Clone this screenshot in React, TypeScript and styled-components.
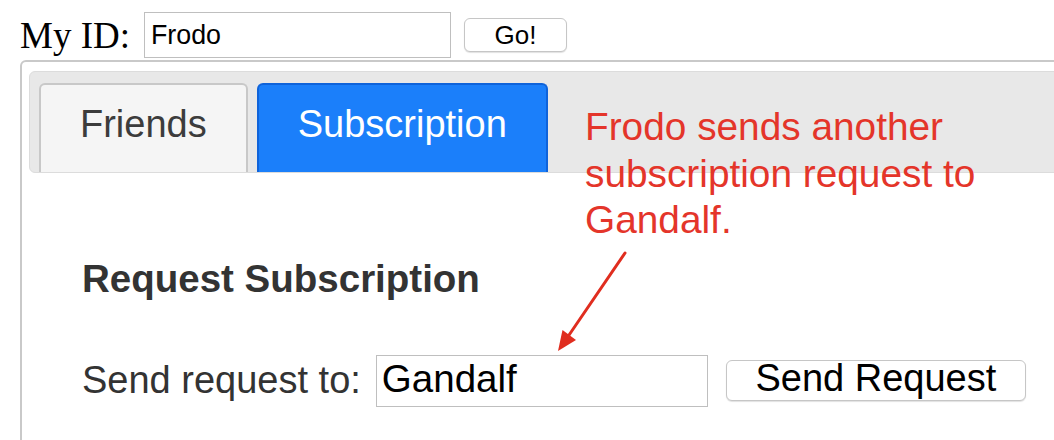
import React from "react";
import styled, { createGlobalStyle } from "styled-components";

const GlobalStyle = createGlobalStyle`
  html, body {
    margin: 0;
    padding: 0;
    background: #ffffff;
    overflow: hidden;
  }
  * { box-sizing: border-box; }
`;

const Page = styled.div`
  position: relative;
  width: 1100px;
  height: 440px;
  padding: 12px 0 0 20px;
  font-family: "Liberation Sans", Arial, sans-serif;
  overflow: hidden;
`;

const TopBar = styled.div`
  display: flex;
  align-items: center;
  height: 46px;
`;

const IdLabel = styled.span`
  font-family: "Liberation Serif", "Times New Roman", serif;
  font-size: 37px;
  color: #000;
  margin-right: 14px;
`;

const TextInput = styled.input<{ $w: number; $h: number; $size: number; $pl: number; $pb?: number }>`
  width: ${(p) => p.$w}px;
  height: ${(p) => p.$h}px;
  font-family: "Liberation Sans", Arial, sans-serif;
  font-size: ${(p) => p.$size}px;
  color: #000;
  border: 1px solid #bfbfbf;
  border-radius: 0;
  padding: 0 ${(p) => p.$pl}px ${(p) => p.$pb ?? 0}px;
  margin: 0;
  outline: none;
  background: #fff;
`;

const Button = styled.button<{ $w: number; $h: number; $size: number; $ml: number; $pb?: number }>`
  width: ${(p) => p.$w}px;
  height: ${(p) => p.$h}px;
  margin-left: ${(p) => p.$ml}px;
  font-family: "Liberation Sans", Arial, sans-serif;
  font-size: ${(p) => p.$size}px;
  line-height: 1;
  color: #000;
  background: #fff;
  border: 1px solid #c6c6c6;
  border-radius: 6px;
  box-shadow: 0 1px 1px rgba(0, 0, 0, 0.12);
  padding: 0 0 ${(p) => p.$pb ?? 0}px;
  display: flex;
  align-items: center;
  justify-content: center;
`;

const Panel = styled.div`
  margin-top: 2px;
  height: 390px;
  border: 2px solid #c9c9c9;
  border-radius: 6px;
  padding: 9px 7px 0;
`;

const TabBar = styled.div`
  display: flex;
  align-items: flex-start;
  gap: 9px;
  height: 102px;
  padding: 11px 9px 0;
  background: #e8e8e8;
  border: 1px solid #dcdcdc;
  border-radius: 6px;
`;

const Tab = styled.div<{ $active?: boolean }>`
  height: 89px;
  padding: 18px 39px 0;
  font-size: 38px;
  line-height: normal;
  white-space: nowrap;
  color: ${(p) => (p.$active ? "#ffffff" : "#3c3c3c")};
  background: ${(p) => (p.$active ? "#1b7ffa" : "#f5f5f5")};
  border: 2px solid ${(p) => (p.$active ? "#0f63da" : "#c8c8c8")};
  border-bottom: none;
  border-radius: 6px 6px 0 0;
`;

const Content = styled.div`
  padding-left: 53px;
`;

const Heading = styled.h2`
  margin: 84px 0 0;
  font-size: 38.5px;
  font-weight: bold;
  line-height: 43.7px;
  color: #333333;
`;

const SendRow = styled.div`
  display: flex;
  align-items: center;
  margin-top: 54px;
`;

const RowLabel = styled.span`
  font-size: 38px;
  color: #333333;
  margin-right: 15px;
`;

const Annotation = styled.div`
  position: absolute;
  left: 585px;
  top: 104px;
  font-size: 38.8px;
  line-height: 46.5px;
  color: #e4352a;
  white-space: pre-line;
`;

const ArrowSvg = styled.svg`
  position: absolute;
  left: 540px;
  top: 240px;
  overflow: visible;
`;

export default function App() {
  return (
    <>
      <GlobalStyle />
      <Page>
        <TopBar>
          <IdLabel>My ID:</IdLabel>
          <TextInput $w={307} $h={46} $size={26.8} $pl={6} defaultValue="Frodo" />
          <Button $w={103} $h={34} $size={26} $ml={13}>Go!</Button>
        </TopBar>
        <Panel>
          <TabBar>
            <Tab>Friends</Tab>
            <Tab $active>Subscription</Tab>
          </TabBar>
          <Content>
            <Heading>Request Subscription</Heading>
            <SendRow>
              <RowLabel>Send request to:</RowLabel>
              <TextInput $w={332} $h={52} $size={38.5} $pl={5} $pb={3} defaultValue="Gandalf" />
              <Button $w={300} $h={41} $size={38} $ml={18} $pb={5}>Send Request</Button>
            </SendRow>
          </Content>
        </Panel>
        <Annotation>{"Frodo sends another\nsubscription request to\nGandalf."}</Annotation>
        <ArrowSvg width="120" height="130" viewBox="540 240 120 130">
          <line x1="625" y1="253" x2="567" y2="338" stroke="#e02d1f" strokeWidth="3" strokeLinecap="round" />
          <polygon points="558,351 576,340 562.5,330" fill="#e02d1f" />
        </ArrowSvg>
      </Page>
    </>
  );
}
